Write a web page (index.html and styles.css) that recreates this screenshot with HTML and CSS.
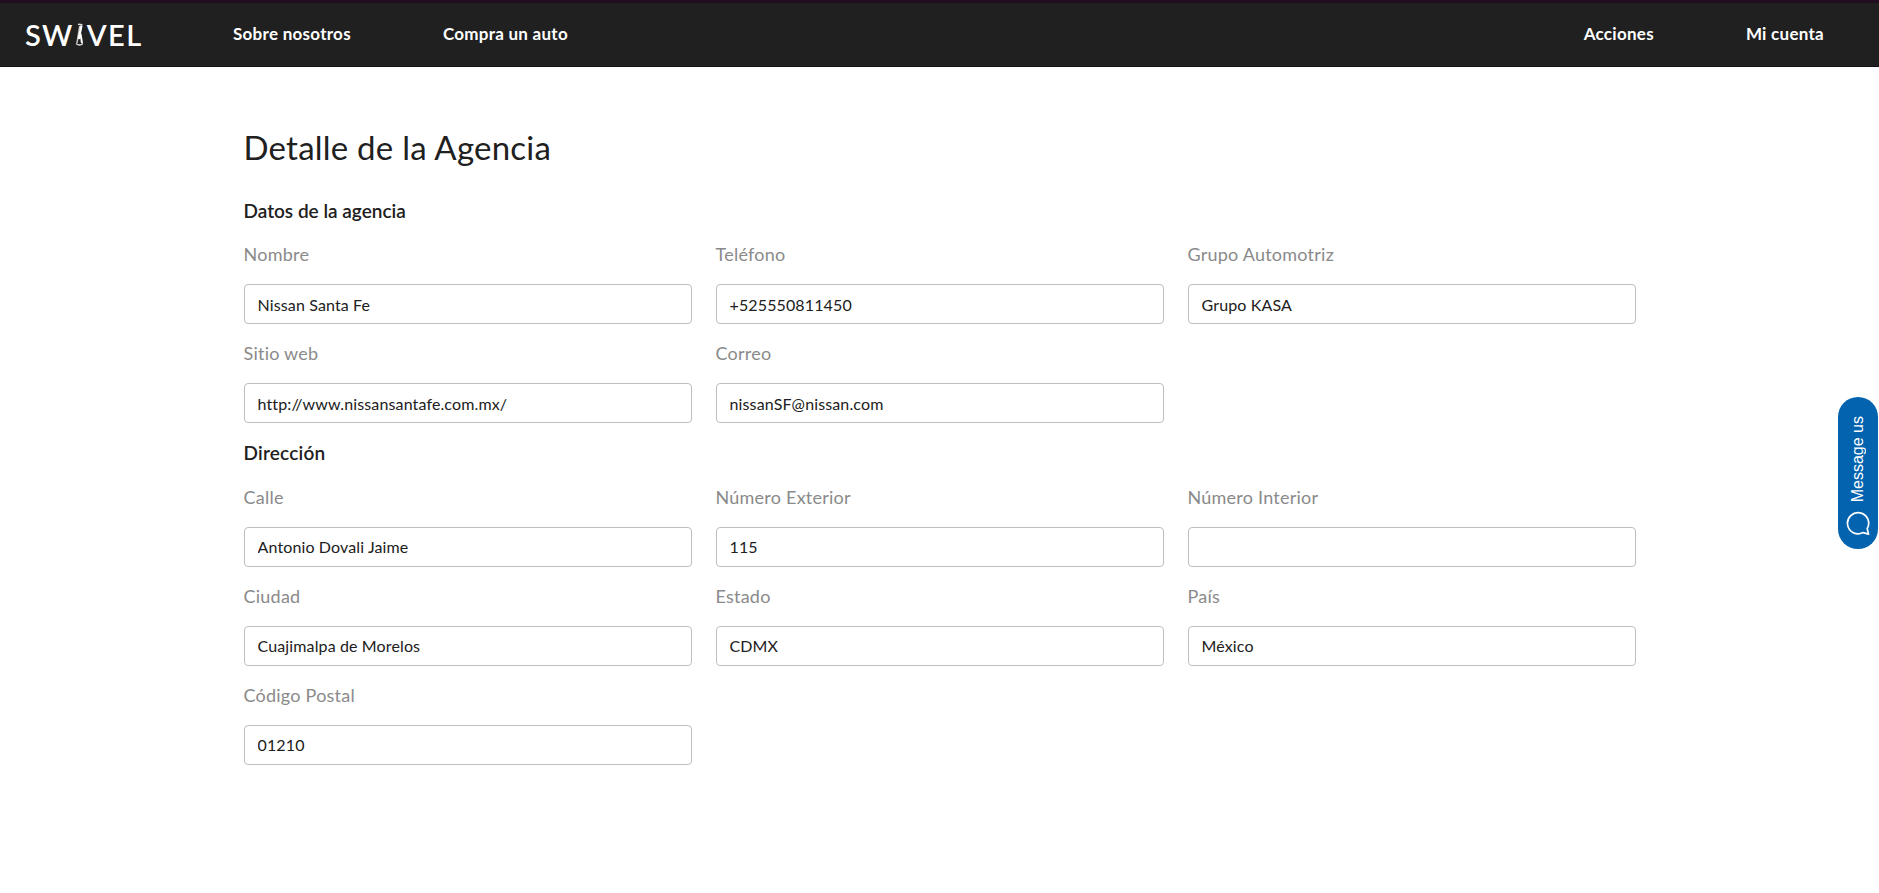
FILE: index.html
```
<!DOCTYPE html>
<html lang="es">
<head>
<meta charset="utf-8">
<title>Detalle de la Agencia</title>
<link rel="stylesheet" href="styles.css">
</head>
<body>
<header class="navbar">
  <a class="logo" aria-label="Swivel"><span class="logo-sw">SW</span><svg class="logo-i" width="10" height="24" viewBox="0 0 10 24"><path d="M3 1.2L7.4 1.8" stroke="#ddd" stroke-width="1.6"/><path d="M4.8 3L2 20" stroke="#ccc" stroke-width="1.5"/><path d="M6.5 2.5L3.8 16" stroke="#fff" stroke-width="2.2"/><path d="M5.5 11L7 20" stroke="#fff" stroke-width="2"/><path d="M1 20.5Q4.5 23.5 8 20.5" stroke="#ddd" stroke-width="1.3" fill="none"/></svg><span class="logo-vel">VEL</span></a>
  <nav class="links">
    <a class="link about">Sobre nosotros</a>
    <a class="link buy">Compra un auto</a>
  </nav>
  <nav class="links account">
    <a class="link actions">Acciones</a>
    <a class="link mine">Mi cuenta</a>
  </nav>
</header>
<main class="content">
  <h1 class="title">Detalle de la Agencia</h1>
  <h2 class="section">Datos de la agencia</h2>
  <div class="grid">
    <label class="field"><span class="label">Nombre</span><input class="input" value="Nissan Santa Fe"></label>
    <label class="field"><span class="label">Teléfono</span><input class="input" value="+525550811450"></label>
    <label class="field"><span class="label">Grupo Automotriz</span><input class="input" value="Grupo KASA"></label>
    <label class="field"><span class="label">Sitio web</span><input class="input" value="http://www.nissansantafe.com.mx/"></label>
    <label class="field"><span class="label">Correo</span><input class="input" value="nissanSF@nissan.com"></label>
  </div>
  <h2 class="section second">Dirección</h2>
  <div class="grid address">
    <label class="field"><span class="label">Calle</span><input class="input" value="Antonio Dovali Jaime"></label>
    <label class="field"><span class="label">Número Exterior</span><input class="input" value="115"></label>
    <label class="field"><span class="label">Número Interior</span><input class="input" value=""></label>
    <label class="field"><span class="label">Ciudad</span><input class="input" value="Cuajimalpa de Morelos"></label>
    <label class="field"><span class="label">Estado</span><input class="input" value="CDMX"></label>
    <label class="field"><span class="label">País</span><input class="input" value="México"></label>
    <label class="field"><span class="label">Código Postal</span><input class="input" value="01210"></label>
  </div>
</main>
<button class="chat">
  <span class="chat-text">Message us</span>
  <svg width="24" height="24" viewBox="0 0 24 24" fill="none" stroke="#fff" stroke-width="1.7" stroke-linejoin="round"><path d="M22.6 23.1L21.2 17.6A10.6 10.6 0 1 0 17 21.6Z"/></svg>
</button>
</body>
</html>
```
FILE: styles.css
```
* { box-sizing: border-box; }
body {
  margin: 0;
  background: #fff;
  color: #202020;
  font-family: Lato, "Liberation Sans", sans-serif;
}
.navbar {
  display: flex;
  align-items: center;
  height: 67px;
  padding: 0 55px 2px 24px;
  background: #202020;
  border-top: 3px solid #200d20;
  border-bottom: 1px solid #190f19;
  color: #fff;
}
.logo {
  display: flex;
  align-items: center;
  width: 209px;
  font-size: 29px;
  font-weight: 600;
  line-height: 32px;
  letter-spacing: 1.4px;
}
.logo-sw, .logo-vel { padding-top: 2px; }
.logo-sw { padding-left: 1px; }
.logo-i { margin: 2px 2px 0 1px; }
.links { display: flex; gap: 92px; }
.account { margin-left: auto; }
.link {
  font-size: 17px;
  font-weight: 700;
  line-height: 24px;
  letter-spacing: 0.27px;
  white-space: nowrap;
}
.content {
  width: 1392px;
  margin: 0 auto;
  padding-top: 56px;
}
.title {
  margin: 0;
  font-size: 33px;
  font-weight: 400;
  line-height: 48px;
  letter-spacing: 0.22px;
}
.section {
  margin: 26px 0 0;
  font-size: 19px;
  font-weight: 600;
  line-height: 28px;
}
.grid {
  display: grid;
  grid-template-columns: repeat(3, 448px);
  column-gap: 24px;
  row-gap: 8px;
  margin-top: 8px;
}
.section.second { margin-top: 16px; letter-spacing: 0.2px; }
.grid.address { margin-top: 9px; }
.field { display: flex; flex-direction: column; }
.label {
  height: 51px;
  font-size: 18px;
  line-height: 42px;
  letter-spacing: 0.23px;
  color: #8a8a8a;
}
.input {
  width: 448px;
  height: 40px;
  padding: 0 13px;
  border: 1px solid #bfbfbf;
  border-radius: 4px;
  background: #fff;
  color: #202020;
  font: 16px Lato, "Liberation Sans", sans-serif;
  letter-spacing: 0.13px;
}
.address .input { padding-bottom: 2px; }
.chat {
  position: fixed;
  top: 397px;
  right: 1px;
  display: flex;
  flex-direction: column;
  align-items: center;
  justify-content: flex-end;
  gap: 9px;
  width: 40px;
  height: 152px;
  padding: 0 0 14px;
  border: 0;
  border-radius: 20px;
  background: #0363ae;
  color: #fff;
}
.chat-text {
  writing-mode: vertical-rl;
  transform: rotate(180deg);
  font: 16px/20px "Liberation Sans", Arial, sans-serif;
}
```
